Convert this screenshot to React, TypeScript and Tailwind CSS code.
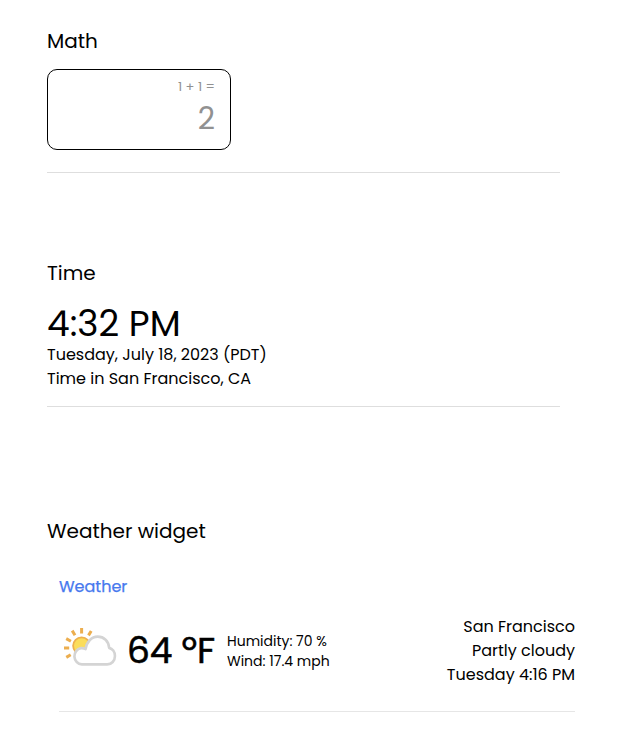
import React from "react";

function SunCloudIcon() {
  return (
    <svg width="56" height="44" viewBox="0 0 56 44" fill="none" className="block shrink-0">
      <circle cx="18.6" cy="20.8" r="8.5" fill="#fbdd5b" stroke="#eeb04e" strokeWidth="1.8" />
      <g stroke="#ecae4f" strokeWidth="3">
        <path d="M18.6 3v5.4M9.2 5.6l2.8 4.6M28.2 6l-2.7 4.4M3.2 13.6l4.7 2.6M1 23h5.2M3.3 32.4l4.4-2.6" />
      </g>
      <path
        d="M17.5 39.6a8.2 8.2 0 0 1-.9-16.3c1.4-.1 3.5.2 5 .9 1-7 6.2-12.4 13-12.4 6.7 0 11.6 4.6 12.2 11.2 3.5.9 6.2 4.1 6.2 8.2 0 4.7-3.6 8.4-8.200 8.400Z"
        transform="matrix(.935 0 0 1 2.4 -.2)"
        fill="#fff"
        stroke="#d4d4d4"
        strokeWidth="2.8"
        strokeLinejoin="round"
      />
    </svg>
  );
}

function Heading({ children }: { children: React.ReactNode }) {
  return <h2 className="text-[20px] leading-[30px]">{children}</h2>;
}

export default function App() {
  return (
    <main className="h-[750px] w-[631px] overflow-hidden bg-white pt-[26px] pl-[47px] font-['Poppins','Inter',sans-serif] text-black">
      <section className="h-[232px] w-[513px]">
        <Heading>Math</Heading>
        <div className="mt-[13px] flex h-[81px] w-[184px] flex-col items-end rounded-[10px] border border-black pt-[7px] pr-[15px] text-[#919191]">
          <div className="text-[13px] leading-[20px]">1 + 1 =</div>
          <div className="text-[30px] leading-[43px]">2</div>
        </div>
        <div className="mt-[22px] h-px bg-[#dedede]" />
      </section>

      <section className="h-[258px] w-[513px]">
        <Heading>Time</Heading>
        <div className="mt-[16px] text-[36px] leading-[39px]">4:32 PM</div>
        <div className="text-[16px] leading-[24px]">
          <p>Tuesday, July 18, 2023 (PDT)</p>
          <p>Time in San Francisco, CA</p>
        </div>
        <div className="mt-[15px] h-px bg-[#dedede]" />
      </section>

      <section>
        <Heading>Weather widget</Heading>
        <div className="ml-[12px] w-[516px] pt-[29px]">
          <div className="text-[16px] leading-[24px] text-[#4779ee] [-webkit-text-stroke:0.25px_#4779ee]">Weather</div>
          <div className="mt-[16px] flex h-[72px] items-center">
            <div className="ml-[4px] w-[64px] pb-[8px]">
              <SunCloudIcon />
            </div>
            <div className="w-[100px] text-[36px] leading-[48px] tracking-[-0.2px] whitespace-nowrap [-webkit-text-stroke:0.5px_black]">
              64 ºF
            </div>
            <div className="text-[14px] leading-[20px] whitespace-nowrap">
              <p>Humidity: 70 %</p>
              <p>Wind: 17.4 mph</p>
            </div>
            <div className="ml-auto text-right text-[16px] leading-[24px] whitespace-nowrap">
              <p>San Francisco</p>
              <p>Partly cloudy</p>
              <p>Tuesday 4:16 PM</p>
            </div>
          </div>
          <div className="mt-[24px] h-px bg-[#e6e6e6]" />
        </div>
      </section>
    </main>
  );
}
